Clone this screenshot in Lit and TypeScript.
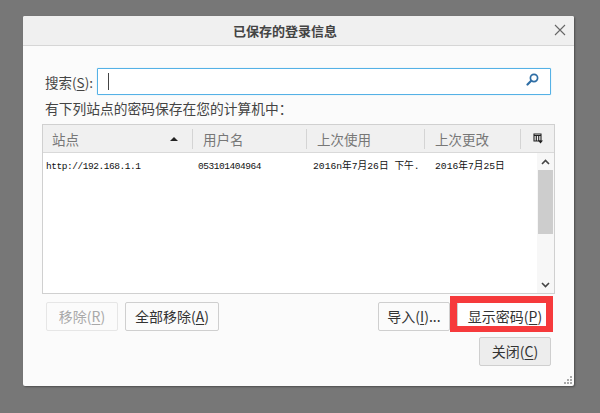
import { LitElement, html, css, svg } from "lit";
import { customElement } from "lit/decorators.js";

@customElement("app-root")
export class AppRoot extends LitElement {
  static styles = css`
    :host { display: block; width: 600px; height: 413px; background: #777; overflow: hidden;
      font-family: "Noto Sans CJK SC", "Noto Sans", sans-serif; font-size: 13px; color: #333; }
    .page { padding: 16px 0 0 23px; }
    .dialog { position: relative; box-sizing: border-box; width: 551px; height: 370px; background: #fbfbfb;
      border-radius: 2px; box-shadow: 1px 1px 2px rgba(0,0,0,.35); display: flex; flex-direction: column; }
    .title { height: 30px; flex: none; box-sizing: border-box; background: #f0f0f0; border-bottom: 1px solid #d6d6d6;
      border-radius: 2px 2px 0 0; display: flex; align-items: center; justify-content: center; padding-right: 27px;
      font-weight: 700; font-size: 13px; color: #444; position: relative; line-height: 30px; }
    .close { position: absolute; right: 8px; top: 8px; width: 12px; height: 12px; display: block; }
    .body { flex: 1; padding: 22px 23px 0 19px; display: flex; flex-direction: column; }
    .search { display: flex; align-items: center; height: 27px; }
    .search label { white-space: nowrap; font-size: 13.5px; color: #444; width: 52px; margin-left: 3px; }
    u { text-underline-offset: 2px; }
    .input { flex: 1; height: 27px; box-sizing: border-box; background: #fff; border: 1px solid #55b1e6;
      box-shadow: 0 0 1px #8fd0f2; border-radius: 1px; display: flex; align-items: center; justify-content: space-between; padding: 0 11px 0 10px; }
    .caret { width: 1px; height: 17px; background: #444; }
    .lens { width: 13px; height: 13px; display: block; margin-bottom: 4px; }
    .hint { margin: 4px 0 0 3px; height: 25px; line-height: 18px; font-size: 13.75px; color: #444; white-space: nowrap; }
    .tree { box-sizing: border-box; width: 513px; height: 170px; border: 1px solid #d0d0d0; background: #fff; display: flex; flex-direction: column; flex: none; }
    .head { height: 28px; flex: none; box-sizing: border-box; background: #f0f0f0; border-bottom: 1px solid #d9d9d9;
      display: grid; grid-template-columns: 150px 114px 118px 96px 1fr; align-items: center; color: #777; font-size: 13.5px; }
    .hc { height: 20px; line-height: 20px; padding-left: 10px; box-sizing: border-box; border-right: 1px solid #d4d4d4; display: flex; align-items: center; justify-content: space-between; white-space: nowrap; }
    .hc.site { padding-left: 9px; }
    .hc:last-child { border-right: none; padding-left: 12px; }
    .arrow { width: 0; height: 0; border-left: 4px solid transparent; border-right: 4px solid transparent; border-bottom: 4px solid #222; margin-right: 14px; }
    .cols { width: 10px; height: 11px; display: block; }
    .rows { flex: 1; display: flex; min-height: 0; }
    .list { flex: 1; padding: 5px 0 0 3px; }
    .row { display: grid; grid-template-columns: 152px 115px 122px 1fr; font-family: "Liberation Mono", "Noto Sans CJK SC", monospace;
      font-size: 9.5px; letter-spacing: -.45px; line-height: 17px; color: #111; white-space: nowrap; }
    .cn { font-size: 9.7px; letter-spacing: 0; }
    .sb { width: 17px; flex: none; background: #f7f7f7; display: flex; flex-direction: column; align-items: center; justify-content: space-between; }
    .sb svg { width: 9px; height: 6px; display: block; margin: 6px 0 5px; }
    .track { flex: 1; width: 100%; }
    .thumb { width: 15px; margin-left: 1px; height: 64px; background: #cdcdcd; }
    .btns { display: flex; margin: 8px 0 0 4px; height: 29px; }
    .btn { box-sizing: border-box; height: 29px; border: 1px solid #cfcfcf; border-radius: 2px; background: #fbfbfb; padding-bottom: 2px;
      font-size: 14px; color: #333; display: flex; align-items: center; justify-content: center; white-space: nowrap; line-height: 1; }
    .remove { width: 72px; color: #a9a9a9; border-color: #e6e6e6; }
    .removeall { width: 94px; margin-left: 7px; }
    .spacer { flex: 1; }
    .import { width: 72px; }
    .show { position: relative; width: 94px; margin-left: 7px; background: #fff; padding-left: 2px; }
    .mark { position: absolute; left: -8px; top: -7px; width: 103px; height: 36px; box-sizing: border-box;
      border: solid #f63a3c; border-width: 7px 7px 6px 7px; }
    .foot { display: flex; justify-content: flex-end; margin-top: 6px; }
    .closebtn { width: 72px; background: #ededed; }
    .grip { position: absolute; right: 2px; bottom: 2px; width: 9px; height: 9px; display: block; }
  `;

  render() {
    return html`<div class="page"><div class="dialog">
      <div class="title">已保存的登录信息
        <svg class="close" viewBox="0 0 12 12"><path d="M1 1 11 11M11 1 1 11" stroke="#666" stroke-width="1.1" fill="none"/></svg>
      </div>
      <div class="body">
        <div class="search">
          <label>搜索(<u>S</u>):</label>
          <div class="input"><span class="caret"></span>
            <svg class="lens" viewBox="0 0 13 13"><circle cx="8" cy="5" r="3.6" fill="none" stroke="#2f6ea5" stroke-width="1.7"/><path d="M5.2 7.8 1.5 11.5" stroke="#2f6ea5" stroke-width="2.2" stroke-linecap="round"/></svg>
          </div>
        </div>
        <div class="hint">有下列站点的密码保存在您的计算机中：</div>
        <div class="tree">
          <div class="head">
            <div class="hc site">站点<span class="arrow"></span></div>
            <div class="hc">用户名</div>
            <div class="hc">上次使用</div>
            <div class="hc">上次更改</div>
            <div class="hc"><svg class="cols" viewBox="0 0 10 11"><path d="M1 1h7v7H1zM1 2.5h7M3.3 3v5M5.7 3v5" fill="none" stroke="#222" stroke-width="1.1"/><path d="M5 7.5h5L7.5 10.5z" fill="#222"/></svg></div>
          </div>
          <div class="rows">
            <div class="list"><div class="row">
              <span>http://192.168.1.1</span><span>053101404964</span>
              <span class="cn">2016n年7月26日 下午.</span><span class="cn">2016年7月25日</span>
            </div></div>
            <div class="sb">
              <svg viewBox="0 0 9 6"><path d="M1 5 4.5 1.5 8 5" fill="none" stroke="#444" stroke-width="1.6"/></svg>
              <div class="track"><div class="thumb"></div></div>
              <svg viewBox="0 0 9 6"><path d="M1 1 4.5 4.5 8 1" fill="none" stroke="#444" stroke-width="1.6"/></svg>
            </div>
          </div>
        </div>
        <div class="btns">
          <div class="btn remove">移除(<u>R</u>)</div>
          <div class="btn removeall">全部移除(<u>A</u>)</div>
          <div class="spacer"></div>
          <div class="btn import">导入(<u>I</u>)...</div>
          <div class="btn show">显示密码(<u>P</u>)<span class="mark"></span></div>
        </div>
        <div class="foot"><div class="btn closebtn">关闭(<u>C</u>)</div></div>
      </div>
      <svg class="grip" viewBox="0 0 9 9">${[[7,1],[4,4],[7,4],[1,7],[4,7],[7,7]].map(([x,y]) => svg`<rect x=${x} y=${y} width="2" height="2" fill="#aaa"/>`)}</svg>
    </div></div>`;
  }
}
